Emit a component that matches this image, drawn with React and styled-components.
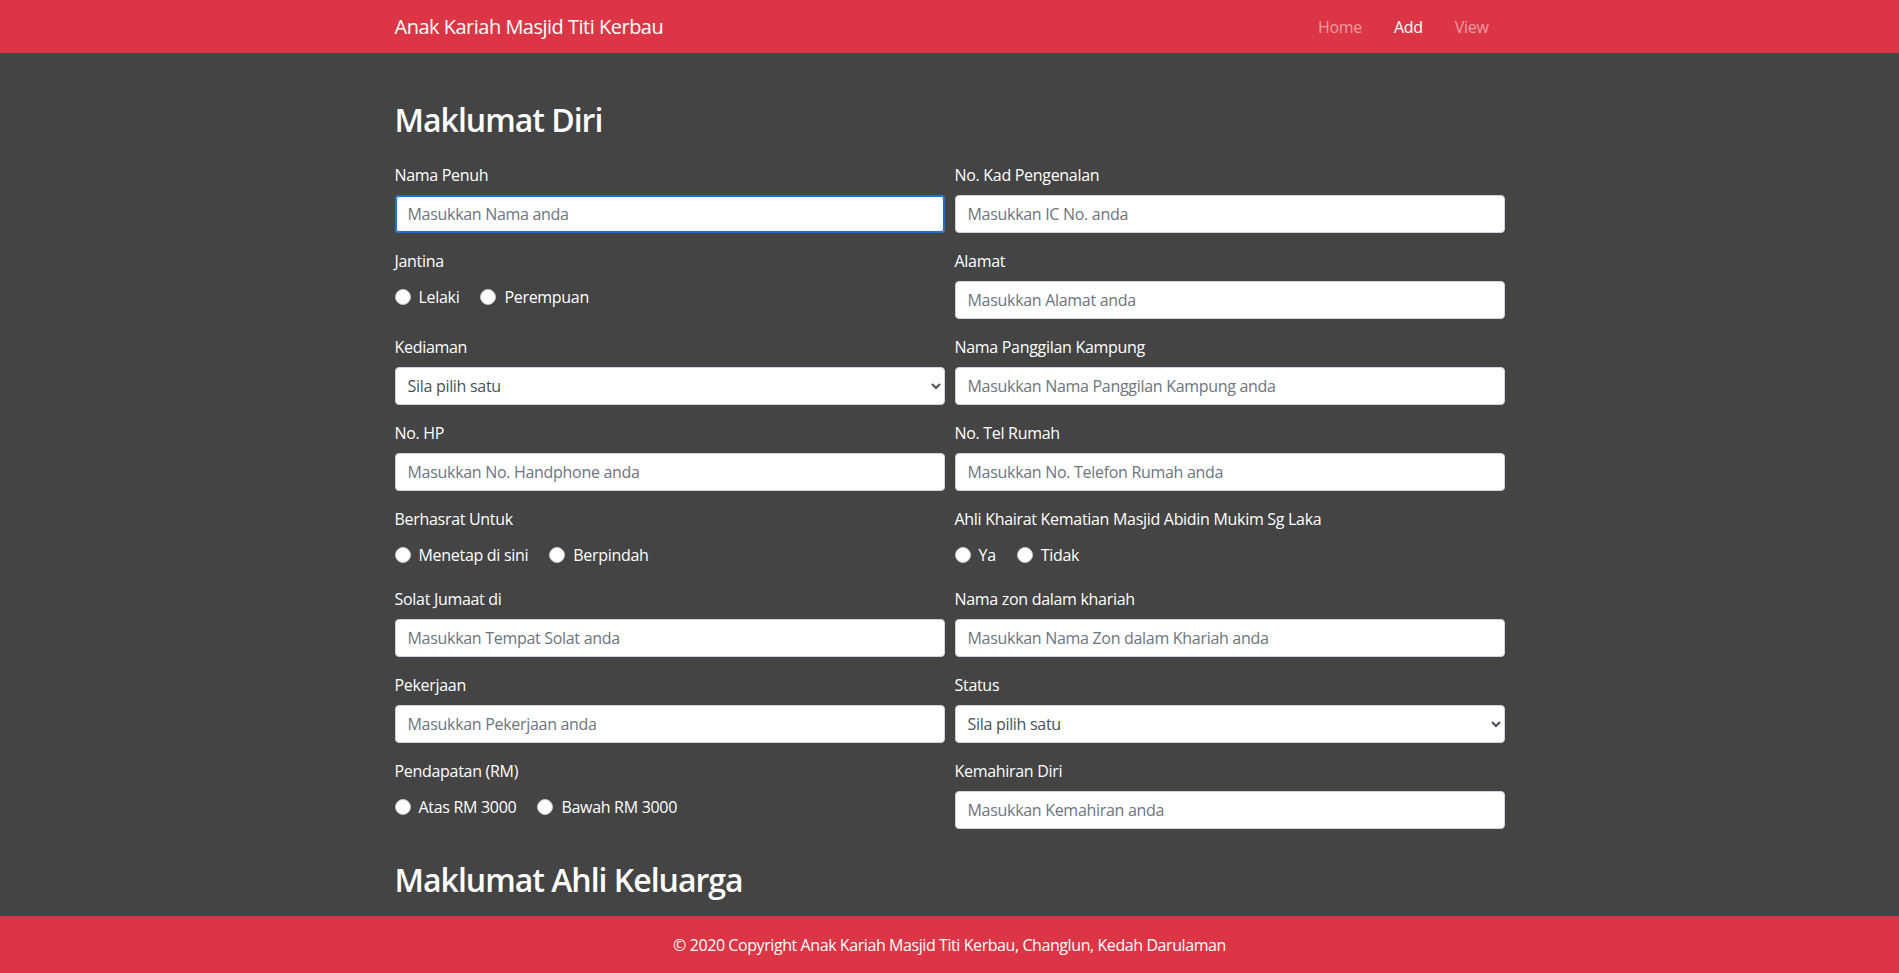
import React from "react";
import styled, { createGlobalStyle } from "styled-components";

const GlobalStyle = createGlobalStyle`
  body {
    margin: 0;
    background: #444444;
    font-family: "Open Sans", "Noto Sans", Arial, sans-serif;
    font-size: 16px;
    color: #fff;
  }
  * {
    box-sizing: border-box;
  }
`;

const Page = styled.div`
  display: flex;
  flex-direction: column;
  height: 100vh;
  overflow: hidden;
`;

const Navbar = styled.nav`
  flex: 0 0 53px;
  display: flex;
  align-items: center;
  background: #dc3545;
`;

const Container = styled.div`
  width: 1140px;
  margin: 0 auto;
  padding: 0 15px;
`;

const NavInner = styled(Container)`
  display: flex;
  align-items: center;
  justify-content: space-between;
`;

const Brand = styled.a`
  font-size: 20px;
  line-height: 30px;
  color: #fff;
  text-decoration: none;
  letter-spacing: -0.5px;
`;

const NavList = styled.ul`
  display: flex;
  list-style: none;
  margin: 0;
  padding: 0;
`;

const NavLink = styled.a`
  display: block;
  padding: 0 16px;
  line-height: 24px;
  text-decoration: none;
  letter-spacing: -0.3px;
  color: ${(p) => (p.$active ? "#fff" : "rgba(255, 255, 255, 0.5)")};
`;

const Main = styled.main`
  flex: 1;
  overflow: hidden;
`;

const Content = styled(Container)`
  padding-top: 48px;
`;

const SectionTitle = styled.h2`
  margin: ${(p) => (p.$first ? "0 0 24px" : "16px 0 0")};
  font-size: 32px;
  font-weight: 600;
  line-height: 1.2;
  letter-spacing: -1px;
  color: #fff;
`;

const FormGrid = styled.div`
  display: grid;
  grid-template-columns: 1fr 1fr;
  column-gap: 10px;
`;

const Field = styled.div`
  margin-bottom: 16px;
`;

const Label = styled.label`
  display: block;
  margin-bottom: 8px;
  line-height: 24px;
  font-size: 16px;
  letter-spacing: -0.3px;
  color: #fff;
`;

const controlStyle = `
  display: block;
  width: 100%;
  height: 38px;
  padding: 6px 12px;
  font-family: inherit;
  font-size: 16px;
  line-height: 24px;
  letter-spacing: -0.3px;
  color: #495057;
  background: #fff;
  border: 1px solid #ced4da;
  border-radius: 4px;
  outline: none;
`;

const Input = styled.input`
  ${controlStyle}
  border-color: ${(p) => (p.$focused ? "#1a6fe0" : "#ced4da")};
  box-shadow: ${(p) => (p.$focused ? "inset 0 0 0 1px #1a6fe0" : "none")};
  &::placeholder {
    color: #6c757d;
  }
`;

const Select = styled.select`
  ${controlStyle}
  padding: 6px 8px;
`;

const RadioRow = styled.div`
  display: flex;
  align-items: center;
  gap: 21px;
  height: 32px;
`;

const RadioOption = styled.label`
  display: flex;
  align-items: center;
  gap: 8px;
  line-height: 24px;
  letter-spacing: -0.3px;
  color: #fff;
`;

const Radio = styled.input.attrs({ type: "radio" })`
  appearance: none;
  width: 16px;
  height: 16px;
  margin: 0;
  border-radius: 50%;
  background: #fff;
  border: 1px solid #c8c8c8;
`;

const Footer = styled.footer`
  flex: 0 0 57px;
  display: flex;
  align-items: center;
  justify-content: center;
  background: #dc3545;
  color: #fff;
  letter-spacing: -0.42px;
`;

const fields = [
  { label: "Nama Penuh", placeholder: "Masukkan Nama anda", focused: true },
  { label: "No. Kad Pengenalan", placeholder: "Masukkan IC No. anda" },
  { label: "Jantina", name: "jantina", options: ["Lelaki", "Perempuan"] },
  { label: "Alamat", placeholder: "Masukkan Alamat anda" },
  { label: "Kediaman", select: true },
  { label: "Nama Panggilan Kampung", placeholder: "Masukkan Nama Panggilan Kampung anda" },
  { label: "No. HP", placeholder: "Masukkan No. Handphone anda" },
  { label: "No. Tel Rumah", placeholder: "Masukkan No. Telefon Rumah anda" },
  { label: "Berhasrat Untuk", name: "hasrat", options: ["Menetap di sini", "Berpindah"] },
  { label: "Ahli Khairat Kematian Masjid Abidin Mukim Sg Laka", name: "khairat", options: ["Ya", "Tidak"] },
  { label: "Solat Jumaat di", placeholder: "Masukkan Tempat Solat anda" },
  { label: "Nama zon dalam khariah", placeholder: "Masukkan Nama Zon dalam Khariah anda" },
  { label: "Pekerjaan", placeholder: "Masukkan Pekerjaan anda" },
  { label: "Status", select: true },
  { label: "Pendapatan (RM)", name: "pendapatan", options: ["Atas RM 3000", "Bawah RM 3000"] },
  { label: "Kemahiran Diri", placeholder: "Masukkan Kemahiran anda" }
];

const FormField = ({ field }) => {
  let control;
  if (field.options) {
    control = (
      <RadioRow>
        {field.options.map((opt) => (
          <RadioOption key={opt}>
            <Radio name={field.name} value={opt} />
            {opt}
          </RadioOption>
        ))}
      </RadioRow>
    );
  } else if (field.select) {
    control = (
      <Select defaultValue="">
        <option value="">Sila pilih satu</option>
      </Select>
    );
  } else {
    control = <Input type="text" placeholder={field.placeholder} $focused={field.focused} />;
  }
  return (
    <Field>
      <Label>{field.label}</Label>
      {control}
    </Field>
  );
};

export default function App() {
  return (
    <Page>
      <GlobalStyle />
      <Navbar>
        <NavInner>
          <Brand href="#">Anak Kariah Masjid Titi Kerbau</Brand>
          <NavList>
            <li><NavLink href="#">Home</NavLink></li>
            <li><NavLink href="#" $active>Add</NavLink></li>
            <li><NavLink href="#">View</NavLink></li>
          </NavList>
        </NavInner>
      </Navbar>
      <Main>
        <Content>
          <SectionTitle $first>Maklumat Diri</SectionTitle>
          <FormGrid>
            {fields.map((f) => (
              <FormField key={f.label} field={f} />
            ))}
          </FormGrid>
          <SectionTitle>Maklumat Ahli Keluarga</SectionTitle>
        </Content>
      </Main>
      <Footer>© 2020 Copyright Anak Kariah Masjid Titi Kerbau, Changlun, Kedah Darulaman</Footer>
    </Page>
  );
}
